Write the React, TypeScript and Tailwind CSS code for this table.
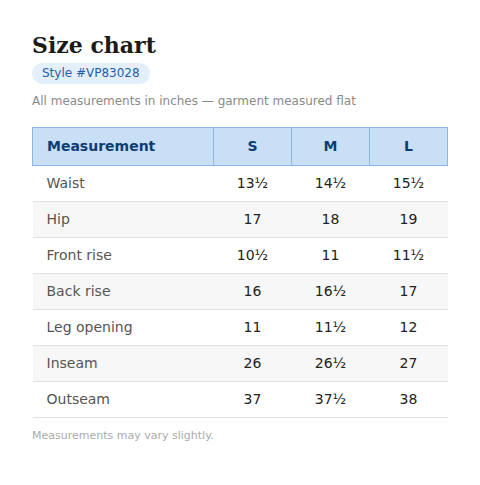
import React from 'react';

const rows: [string, string, string, string][] = [
  ['Waist', '13½', '14½', '15½'],
  ['Hip', '17', '18', '19'],
  ['Front rise', '10½', '11', '11½'],
  ['Back rise', '16', '16½', '17'],
  ['Leg opening', '11', '11½', '12'],
  ['Inseam', '26', '26½', '27'],
  ['Outseam', '37', '37½', '38'],
];

export default function App() {
  return (
    <div className="min-h-screen bg-white px-8 pt-[30px] font-['DejaVu_Sans',sans-serif]">
      <h1 className="font-['DejaVu_Serif',serif] text-[22px] font-bold leading-[30px] text-[#1a1a1a]">
        Size chart
      </h1>
      <span className="mt-[3px] inline-block rounded-full bg-[#e3effb] px-[10px] py-[3px] text-[12px] leading-[15px] text-[#1f5fa8]">
        Style #VP83028
      </span>
      <p className="mt-[10px] text-[12px] leading-[15px] text-[#8a8a8a]">
        All measurements in inches — garment measured flat
      </p>
      <table className="mt-[18px] w-[416px] border-collapse text-[14px]">
        <thead>
          <tr className="h-[38px] bg-[#c9dff5] text-[#0d3d75]">
            <th className="w-[181px] border border-[#8db7e3] pl-[14px] text-left font-bold">Measurement</th>
            <th className="w-[78px] border border-[#8db7e3] text-center font-bold">S</th>
            <th className="w-[78px] border border-[#8db7e3] text-center font-bold">M</th>
            <th className="w-[78px] border border-[#8db7e3] text-center font-bold">L</th>
          </tr>
        </thead>
        <tbody>
          {rows.map((r, i) => (
            <tr key={r[0]} className={`h-[36px] border-b border-[#e2e2e2] ${i % 2 === 1 ? 'bg-[#f7f7f7]' : 'bg-white'}`}>
              <td className="pl-[14px] text-[#555]">{r[0]}</td>
              <td className="text-center text-[#222]">{r[1]}</td>
              <td className="text-center text-[#222]">{r[2]}</td>
              <td className="text-center text-[#222]">{r[3]}</td>
            </tr>
          ))}
        </tbody>
      </table>
      <p className="mt-[11px] text-[11px] leading-[14px] text-[#ababab]">Measurements may vary slightly.</p>
    </div>
  );
}
